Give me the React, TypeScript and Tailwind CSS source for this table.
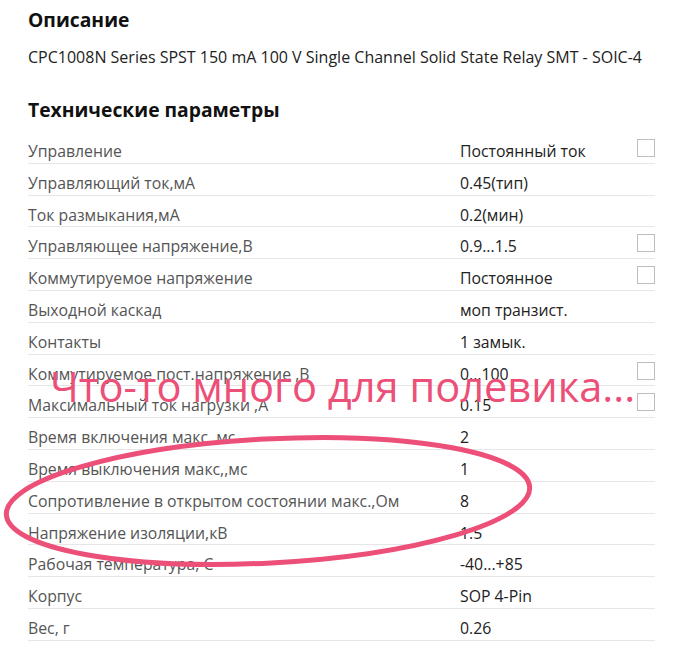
import React from "react";

type Row = { label: string; value: string; check?: boolean };

const rows: Row[] = [
  { label: "Управление", value: "Постоянный ток", check: true },
  { label: "Управляющий ток,мА", value: "0.45(тип)" },
  { label: "Ток размыкания,мА", value: "0.2(мин)" },
  { label: "Управляющее напряжение,В", value: "0.9...1.5", check: true },
  { label: "Коммутируемое напряжение", value: "Постоянное", check: true },
  { label: "Выходной каскад", value: "моп транзист." },
  { label: "Контакты", value: "1 замык." },
  { label: "Коммутируемое пост.напряжение ,В", value: "0...100", check: true },
  { label: "Максимальный ток нагрузки ,А", value: "0.15", check: true },
  { label: "Время включения макс.,мс", value: "2" },
  { label: "Время выключения макс,,мс", value: "1" },
  { label: "Сопротивление в открытом состоянии макс.,Ом", value: "8" },
  { label: "Напряжение изоляции,кВ", value: "1.5" },
  { label: "Рабочая температура, С", value: "-40...+85" },
  { label: "Корпус", value: "SOP 4-Pin" },
  { label: "Вес, г", value: "0.26" },
];

export default function App() {
  return (
    <div
      className="relative w-[682px] h-[648px] overflow-hidden bg-white pl-[28px] pr-[27px] pt-[8px]"
      style={{ fontFamily: '"Open Sans", "Noto Sans", sans-serif' }}
    >
      <h2 className="text-[19.3px] leading-[24px] font-bold text-[#111]">Описание</h2>
      <p className="mt-[15px] text-[16px] leading-[20px] text-[#222]">
        CPC1008N Series SPST 150 mA 100 V Single Channel Solid State Relay SMT - SOIC-4
      </p>
      <h2 className="mt-[31px] text-[19.3px] leading-[24px] font-bold text-[#111]">Технические параметры</h2>
      <div className="mt-[10px]">
        {rows.map((r, i) => (
          <div
            key={i}
            className="flex items-start h-[31.8px] border-b border-[#e6e6e6] text-[15.8px] leading-[22px]"
          >
            <div className="w-[432px] pt-[8px] text-[#555]">{r.label}</div>
            <div className="flex-1 pt-[8px] text-[#222]">{r.value}</div>
            <div className="w-[18px] pt-[7px]">
              {r.check && <div className="w-[18px] h-[18px] border border-[#bdbdbd] bg-white" />}
            </div>
          </div>
        ))}
      </div>

      <div className="absolute left-[50px] top-[362px] text-[41.6px] leading-[48px] text-[#ec4f77] whitespace-nowrap">
        Что-то много для полевика...
      </div>
      <svg className="absolute left-0 top-0 pointer-events-none" width="682" height="648">
        <ellipse
          cx="268"
          cy="501"
          rx="262"
          ry="62"
          fill="none"
          stroke="#ec4f77"
          strokeWidth="5"
          transform="rotate(-3 268 501)"
        />
      </svg>
    </div>
  );
}
